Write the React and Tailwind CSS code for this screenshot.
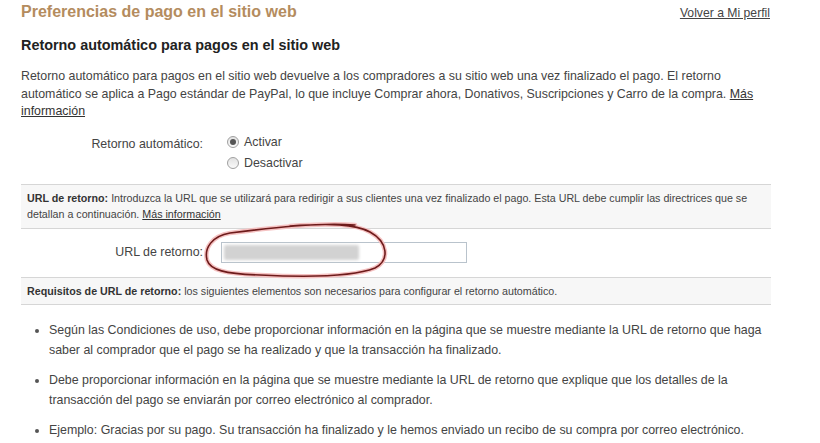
import React from 'react';

const Radio = ({ checked }) => (
    <span className="inline-flex w-[12px] h-[12px] rounded-full border border-[#a0a0a0] bg-gradient-to-b from-[#e2e2e2] to-[#fafafa] items-center justify-center mr-[5px]">
        {checked && <span className="w-[6px] h-[6px] rounded-full bg-[#555]"></span>}
    </span>
);

const App = () => {
    return (
        <div className="w-[820px] h-[443px] overflow-hidden bg-white text-[#3a3a3a]" style={{ fontFamily: '"Liberation Sans", Arial, sans-serif' }}>
            <div className="w-[750px] ml-[21px] relative">
                <div className="flex justify-between items-start pt-[1px]">
                    <h1 className="text-[16px] font-bold text-[#b48c5e] leading-[22px]">Preferencias de pago en el sitio web</h1>
                    <a href="#" className="text-[12.2px] underline text-[#444] mt-[3px] mr-[1px]">Volver a Mi perfil</a>
                </div>
                <h2 className="text-[14.4px] font-bold text-[#222] mt-[12px] leading-[20px]">Retorno automático para pagos en el sitio web</h2>
                <p className="text-[12.4px] leading-[17.5px] mt-[13px] text-[#444]">
                    Retorno automático para pagos en el sitio web devuelve a los compradores a su sitio web una vez finalizado el pago. El retorno automático se aplica a Pago estándar de PayPal, lo que incluye Comprar ahora, Donativos, Suscripciones y Carro de la compra. <a href="#" className="underline text-[#333]">Más información</a>
                </p>

                <div className="flex mt-[12px] text-[12.4px] text-[#444]">
                    <div className="w-[182px] text-right pt-[2px]">Retorno automático:</div>
                    <div className="ml-[24px] flex flex-col gap-[5px]">
                        <label className="flex items-center h-[16px] pt-[3px]"><Radio checked />Activar</label>
                        <label className="flex items-center h-[16px] pt-[3px]"><Radio />Desactivar</label>
                    </div>
                </div>

                <div className="mt-[14px] border-t border-b border-[#d6d6d6] bg-[#f7f7f7] px-[6px] pt-[5px] pb-[6px] text-[10.7px] leading-[16px] text-[#444]">
                    <b className="text-[#333]">URL de retorno:</b> Introduzca la URL que se utilizará para redirigir a sus clientes una vez finalizado el pago. Esta URL debe cumplir las directrices que se detallan a continuación. <a href="#" className="underline text-[#333]">Más información</a>
                </div>

                <div className="flex items-center h-[48px] text-[12.4px] text-[#444]">
                    <div className="w-[182px] text-right">URL de retorno:</div>
                    <div className="ml-[18px] w-[246px] h-[21px] border border-[#b9c3cc] bg-white flex items-center px-[2px]">
                        <span className="block w-[135px] h-[15px] bg-[#d2d2d2] rounded-[2px] blur-[1.5px]"></span>
                    </div>
                </div>

                <div className="border-t border-b border-[#d6d6d6] bg-[#f7f7f7] px-[6px] pt-[6px] pb-[5px] text-[10.7px] leading-[15px] text-[#444]">
                    <b className="text-[#333]">Requisitos de URL de retorno:</b> los siguientes elementos son necesarios para configurar el retorno automático.
                </div>

                <ul className="list-disc pl-[28px] mt-[15px] text-[12.4px] leading-[20px] text-[#444] flex flex-col gap-[10px] marker:text-[#555]">
                    <li>Según las Condiciones de uso, debe proporcionar información en la página que se muestre mediante la URL de retorno que haga saber al comprador que el pago se ha realizado y que la transacción ha finalizado.</li>
                    <li>Debe proporcionar información en la página que se muestre mediante la URL de retorno que explique que los detalles de la transacción del pago se enviarán por correo electrónico al comprador.</li>
                    <li>Ejemplo: Gracias por su pago. Su transacción ha finalizado y le hemos enviado un recibo de su compra por correo electrónico. Puede acceder a su cuenta en www.paypal.com para ver los detalles de esta transacción.</li>
                </ul>

                <svg className="absolute left-[159px] top-[220px] pointer-events-none" width="215" height="62" viewBox="0 0 215 62">
                    <path d="M175 5 C 140 2, 90 8, 50 13 C 32 16, 24 28, 27 40 C 30 50, 45 54, 80 55 C 120 57, 170 58, 195 48 C 210 40, 208 22, 190 12 C 175 4, 150 3, 110 6" fill="none" stroke="#f5c2c2" strokeWidth="4.5" strokeLinecap="round" />
                    <path d="M175 5 C 140 2, 90 8, 50 13 C 32 16, 24 28, 27 40 C 30 50, 45 54, 80 55 C 120 57, 170 58, 195 48 C 210 40, 208 22, 190 12 C 175 4, 150 3, 110 6" fill="none" stroke="#6e1b1b" strokeWidth="1.6" strokeLinecap="round" />
                </svg>
            </div>
        </div>
    );
};

export default App;
